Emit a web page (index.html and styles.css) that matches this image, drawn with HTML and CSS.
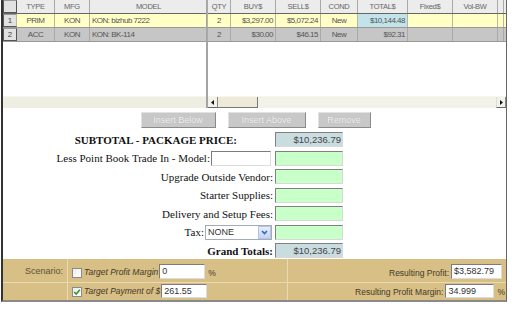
FILE: index.html
```html
<!DOCTYPE html>
<html lang="en">
<head>
    <meta charset="UTF-8">
    <meta name="viewport" content="width=device-width, initial-scale=1.0">
    <title>Package Price</title>
    <link rel="stylesheet" href="styles.css">
</head>
<body>

<div class="sheet">

    <!-- Line items: frozen left pane + scrolling right pane -->
    <div class="grid">
        <div class="pane pane-left">
            <div class="row row-head cols-left">
                <div class="cell num"></div>
                <div class="cell">TYPE</div>
                <div class="cell">MFG</div>
                <div class="cell">MODEL</div>
            </div>
            <div class="row row-prim cols-left">
                <div class="cell num">1</div>
                <div class="cell">PRIM</div>
                <div class="cell">KON</div>
                <div class="cell text">KON: bizhub 7222</div>
            </div>
            <div class="row row-acc cols-left">
                <div class="cell num">2</div>
                <div class="cell">ACC</div>
                <div class="cell">KON</div>
                <div class="cell text">KON: BK-114</div>
            </div>
            <div class="pane-body"></div>
            <div class="hscroll"></div>
        </div>

        <div class="pane pane-right">
            <div class="row row-head cols-right">
                <div class="cell">QTY</div>
                <div class="cell">BUY$</div>
                <div class="cell">SELL$</div>
                <div class="cell">COND</div>
                <div class="cell">TOTAL$</div>
                <div class="cell">Fixed$</div>
                <div class="cell">Vol-BW</div>
                <div class="cell"></div>
            </div>
            <div class="row row-prim cols-right">
                <div class="cell">2</div>
                <div class="cell money">$3,297.00</div>
                <div class="cell money">$5,072.24</div>
                <div class="cell">New</div>
                <div class="cell money total">$10,144.48</div>
                <div class="cell"></div>
                <div class="cell"></div>
                <div class="cell"></div>
            </div>
            <div class="row row-acc cols-right">
                <div class="cell">2</div>
                <div class="cell money">$30.00</div>
                <div class="cell money">$46.15</div>
                <div class="cell">New</div>
                <div class="cell money">$92.31</div>
                <div class="cell"></div>
                <div class="cell"></div>
                <div class="cell"></div>
            </div>
            <div class="pane-body"></div>
            <div class="hscroll">
                <span class="sb-btn"><svg width="4" height="5" viewBox="0 0 4 5"><path d="M3 0L0 2.5L3 5Z" fill="#111"/></svg></span>
                <span class="sb-thumb"></span>
                <span class="sb-track"></span>
                <span class="sb-btn sb-end"><svg width="4" height="5" viewBox="0 0 4 5"><path d="M1 0L4 2.5L1 5Z" fill="#111"/></svg></span>
            </div>
        </div>
    </div>

    <div class="actions">
        <button class="btn btn-below" disabled>Insert Below</button>
        <button class="btn btn-above" disabled>Insert Above</button>
        <button class="btn btn-remove" disabled>Remove</button>
    </div>

    <!-- Totals -->
    <div class="totals">
        <div class="label label-sub">SUBTOTAL - PACKAGE PRICE:</div>
        <div class="box box-sum">$10,236.79</div>

        <div class="label">Less Point Book Trade In - Model:<span class="field field-model"></span></div>
        <div class="box box-edit"></div>

        <div class="label">Upgrade Outside Vendor:</div>
        <div class="box box-edit"></div>

        <div class="label">Starter Supplies:</div>
        <div class="box box-edit"></div>

        <div class="label">Delivery and Setup Fees:</div>
        <div class="box box-edit"></div>

        <div class="label">Tax:<span class="select">NONE<span class="select-btn"><svg width="7" height="5" viewBox="0 0 7 5"><path d="M1 1L3.5 3.5L6 1" fill="none" stroke="#3d63b0" stroke-width="1.6"/></svg></span></span></div>
        <div class="box box-edit"></div>

        <div class="label label-grand">Grand Totals:</div>
        <div class="box box-sum">$10,236.79</div>
    </div>

    <!-- Scenario panel -->
    <div class="scenario">
        <div class="sc-cell sc-name">Scenario:</div>
        <div class="sc-cell sc-opt">
            <span class="check"></span>
            <em>Target Profit Margin</em>
            <span class="field field-pct">0</span>
            <span class="unit">%</span>
        </div>
        <div class="sc-cell sc-result">
            Resulting Profit:
            <span class="field field-res">$3,582.79</span>
        </div>

        <div class="sc-cell sc-name sc-last"></div>
        <div class="sc-cell sc-opt sc-last">
            <span class="check"><svg width="8" height="8" viewBox="0 0 8 8"><path d="M1.2 4L3.2 6L6.8 1.8" fill="none" stroke="#2d9a2d" stroke-width="1.6"/></svg></span>
            <em>Target Payment of $</em>
            <span class="field field-pay">261.55</span>
        </div>
        <div class="sc-cell sc-result sc-last sc-tight">
            Resulting Profit Margin:
            <span class="field field-margin">34.999</span>
            <span class="unit">%</span>
        </div>
    </div>

</div>

</body>
</html>
```

FILE: styles.css
```css
/* Page */
* {
    box-sizing: border-box;
}
body {
    margin: 0;
    background: #fff;
    font-family: "Liberation Sans", Arial, sans-serif;
    color: #333;
}

.sheet {
    width: 506px;
    margin-left: 1px;
    border-left: 2px solid #333;
    border-right: 1px solid #666;
    border-bottom: 2px solid #8a8a8a;
}

/* Grid */
.grid {
    display: flex;
    height: 108px;
}
.pane {
    display: flex;
    flex-direction: column;
}
.pane-left {
    width: 205px;
    border-right: 2px solid #a4a4a4;
}
.pane-right {
    width: 298px;
}
.pane-body {
    flex: 1;
    background: #fff;
}

.row {
    display: grid;
    height: 14px;
    border-bottom: 1px solid #9a9a9a;
}
.cols-left {
    grid-template-columns: 14px 38px 35px 118px;
}
.cols-right {
    grid-template-columns: 23px 45px 45px 37px 50px 45px 45px 6px;
}
.cell {
    display: flex;
    align-items: center;
    justify-content: center;
    border-right: 1px solid #a9a9a9;
    font-size: 8px;
    letter-spacing: -0.5px;
    color: #555;
    white-space: nowrap;
    overflow: hidden;
}
.cell.text {
    justify-content: flex-start;
    padding-left: 2px;
}
.cell.money {
    justify-content: flex-end;
    padding-right: 2px;
}
.cell.num {
    background: #e2e2e2;
    border: 1px solid #555;
    border-top-color: #999;
    color: #444;
    letter-spacing: 0;
}
.row-head {
    background: #ececec;
    border-bottom-color: #666;
}
.row-head .cell {
    color: #666;
    font-size: 7.5px;
    letter-spacing: -0.3px;
}
.row-prim {
    background: #ffffc6;
}
.row-prim .cell {
    border-right-color: #b8b8a0;
}
.row-acc {
    background: #c6c6c6;
}
.cell.total {
    background: #c3e3ea;
}

/* Scrollbars */
.hscroll {
    display: flex;
    height: 12px;
    background: #efeee3;
    border-top: 1px solid #f7f6ee;
}
.sb-btn {
    width: 10px;
    display: flex;
    align-items: center;
    justify-content: center;
    background: #f3f2ea;
    border-right: 1px solid #888;
    border-bottom: 1px solid #666;
}
.sb-end {
    border-left: 1px solid #ddd;
}
.sb-thumb {
    width: 40px;
    background: #efe9da;
    border-right: 1px solid #777;
    border-bottom: 1px solid #777;
}
.sb-track {
    flex: 1;
    background: #f3f2e8;
}

/* Buttons */
.actions {
    display: flex;
    justify-content: center;
    gap: 12px;
    margin-top: 4px;
    padding-left: 2px;
}
.btn {
    height: 16px;
    padding: 0;
    font-family: "Liberation Sans", Arial, sans-serif;
    font-size: 9px;
    color: #f2f2f2;
    text-shadow: 0 0 1px #aaa;
    background: #c8c8c8;
    border: 1px solid;
    border-color: #e2e2e2 #8a8a8a #8a8a8a #e2e2e2;
}
.btn-below { width: 75px; }
.btn-above { width: 78px; }
.btn-remove { width: 53px; }

/* Totals */
.totals {
    display: grid;
    grid-template-columns: 270px 68px;
    column-gap: 2px;
    row-gap: 3.5px;
    margin-top: 4px;
    margin-bottom: 1px;
}
.label {
    display: flex;
    align-items: center;
    justify-content: flex-end;
    height: 15px;
    font-family: "Liberation Serif", "Times New Roman", serif;
    font-size: 11px;
    color: #111;
    white-space: nowrap;
}
.label-sub {
    font-weight: bold;
    padding-right: 36px;
}
.label-grand {
    font-weight: bold;
}
.box {
    height: 15px;
    border: 1px solid;
    border-color: #808080 #d8d8d8 #d8d8d8 #808080;
    font-size: 9.5px;
    color: #444;
    text-align: right;
    line-height: 13px;
    padding-right: 1px;
}
.box-sum {
    background: #c9dde1;
}
.box-edit {
    background: #c9ffc9;
}

.field {
    display: inline-block;
    height: 15px;
    background: #fff;
    border: 1px solid;
    border-color: #7c7c7c #dcdcdc #dcdcdc #7c7c7c;
    font-family: "Liberation Sans", Arial, sans-serif;
    font-size: 9px;
    line-height: 13px;
    padding-left: 2px;
    color: #333;
    font-style: normal;
}
.field-model {
    width: 60px;
    margin-left: 1px;
    margin-right: 2px;
}

.select {
    display: flex;
    align-items: center;
    justify-content: space-between;
    width: 67px;
    height: 15px;
    margin-left: 1px;
    margin-right: 1px;
    padding-left: 2px;
    background: #fff;
    border: 1px solid #a5acb5;
    font-family: "Liberation Sans", Arial, sans-serif;
    font-size: 9px;
    color: #333;
}
.select-btn {
    display: flex;
    align-items: center;
    justify-content: center;
    width: 13px;
    height: 13px;
    background: linear-gradient(#e6eefc, #c3d3f2);
    border: 1px solid #b3c4e6;
}

/* Scenario panel */
.scenario {
    display: grid;
    grid-template-columns: 65px 220px 218px;
    grid-template-rows: 24px 17px;
    background: #d7bf86;
    font-size: 8.5px;
    color: #443a28;
}
.sc-cell {
    display: flex;
    align-items: flex-end;
    border-right: 1px solid #e8dbb2;
    border-bottom: 1px solid #e8dbb2;
    padding-bottom: 3px;
    white-space: nowrap;
}
.sc-last {
    border-bottom: none;
    padding-bottom: 2px;
}
.sc-name {
    justify-content: flex-end;
    align-items: center;
    padding: 0 4px 0 0;
    font-size: 9px;
    color: #5e5239;
}
.sc-opt {
    padding-left: 4px;
}
.sc-opt em {
    margin-left: 2px;
    margin-bottom: 1px;
}
.sc-result {
    justify-content: flex-end;
    border-right: none;
    padding-right: 4px;
}
.sc-result .field {
    margin-left: 2px;
}
.sc-tight {
    padding-right: 1px;
}
.sc-result,
.sc-opt em,
.unit {
    line-height: 12px;
}
.unit {
    margin-left: 3px;
}

.check {
    display: inline-flex;
    align-items: center;
    justify-content: center;
    width: 10px;
    height: 10px;
    margin-bottom: 1px;
    background: linear-gradient(135deg, #ececec, #fff);
    border: 1px solid #8b8b8b;
}

.field-pct { width: 46px; margin-left: 1px; }
.field-pay { width: 46px; height: 14px; line-height: 12px; margin-left: 1px; }
.field-res { width: 51px; }
.field-margin { width: 49px; height: 14px; line-height: 12px; }
```
